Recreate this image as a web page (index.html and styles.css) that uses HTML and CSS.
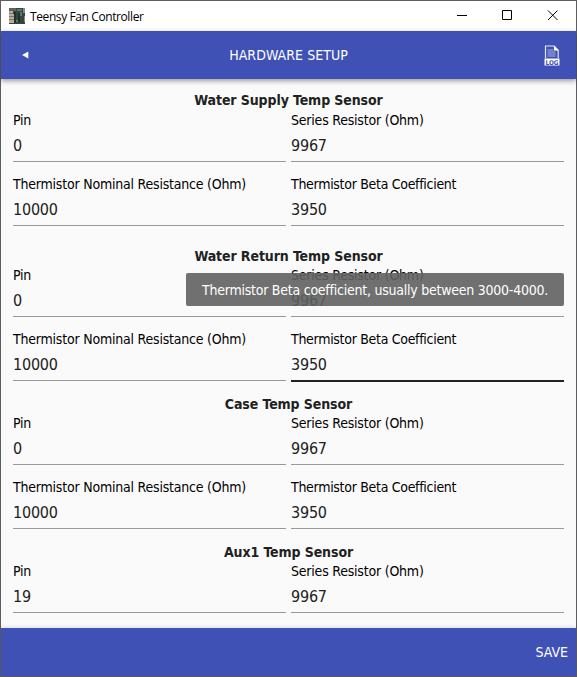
FILE: index.html
```html
<!DOCTYPE html>
<html lang="en">
<head>
<meta charset="utf-8">
<title>Teensy Fan Controller</title>
<link rel="stylesheet" href="styles.css">
</head>
<body>
<div class="window">
  <div class="titlebar">
    <svg class="app-icon" width="16" height="16" viewBox="0 0 16 16" shape-rendering="crispEdges">
      <path fill="#354641" d="M0 0h16v16H0z"/>
      <path fill="#655e55" d="M0 0h7v3H0z"/>
      <path fill="#b9ad99" d="M0 3h4v2H0zM0 6h5v2H0zM0 9h5v2H0zM0 12h5v3H0z"/>
      <path fill="#7d7768" d="M0 5h4v1H0zM0 8h5v1H0zM0 11h5v1H0z"/>
      <path fill="#1f302d" d="M5 4h2v11H5zM9 5h2v9H9z"/>
      <path fill="#60756b" d="M8 1h5v2H8zM11 4h2v4h-2zM7 12h2v2H7z"/>
      <path fill="#8b897b" d="M14 0h2v5h-2zM15 8h1v6h-1z"/>
    </svg>
    <span class="app-name">Teensy Fan Controller</span>
    <svg class="window-buttons" width="138" height="30" viewBox="0 0 138 30" fill="none" stroke="#000">
      <path d="M19 14.500h10M64.500 9.500h9v9h-9zM110 9.500l9.500 9.500M119.500 9.500l-9.500 9.500"/>
    </svg>
  </div>

  <div class="toolbar">
    <svg class="back" width="7" height="8" viewBox="0 0 7 8"><path fill="#fff" d="M0 4 6.300.6v6.800z"/></svg>
    <span class="toolbar-title">HARDWARE SETUP</span>
    <svg class="log-icon" width="16" height="21" viewBox="0 0 16 21">
      <path d="M1.500 13V1h8.500l4.200 4.500V13" fill="none" stroke="#e4e7f6" stroke-width="1.200"/>
      <path d="M10 .5v5h5z" fill="#fff"/>
      <path d="M3.500 5h6M3.500 7h8M3.500 9h8M3.500 11h8" stroke="#aab2de" stroke-width="1.200"/>
      <path d="M.5 13.500h15v7H.5z" fill="#fff"/>
      <text class="log-text" x="8" y="19.500" text-anchor="middle" textLength="13" lengthAdjust="spacingAndGlyphs">LOG</text>
    </svg>
  </div>

  <main class="content">
    <section class="sensor sensor-spaced">
      <h2>Water Supply Temp Sensor</h2>
      <div class="fields">
        <div class="field"><span class="label">Pin</span><span class="value">0</span></div>
        <div class="field"><span class="label">Series Resistor (Ohm)</span><span class="value">9967</span></div>
        <div class="field"><span class="label">Thermistor Nominal Resistance (Ohm)</span><span class="value">10000</span></div>
        <div class="field"><span class="label label-tight">Thermistor Beta Coefficient</span><span class="value">3950</span></div>
      </div>
    </section>
    <section class="sensor">
      <h2>Water Return Temp Sensor</h2>
      <div class="fields">
        <div class="field"><span class="label">Pin</span><span class="value">0</span></div>
        <div class="field"><span class="label">Series Resistor (Ohm)</span><span class="value">9967</span></div>
        <div class="field"><span class="label">Thermistor Nominal Resistance (Ohm)</span><span class="value">10000</span></div>
        <div class="field focused"><span class="label label-tight">Thermistor Beta Coefficient</span><span class="value">3950</span>
          <div class="tooltip">Thermistor Beta coefficient, usually between 3000-4000.</div>
        </div>
      </div>
    </section>
    <section class="sensor">
      <h2>Case Temp Sensor</h2>
      <div class="fields">
        <div class="field"><span class="label">Pin</span><span class="value">0</span></div>
        <div class="field"><span class="label">Series Resistor (Ohm)</span><span class="value">9967</span></div>
        <div class="field"><span class="label">Thermistor Nominal Resistance (Ohm)</span><span class="value">10000</span></div>
        <div class="field"><span class="label label-tight">Thermistor Beta Coefficient</span><span class="value">3950</span></div>
      </div>
    </section>
    <section class="sensor">
      <h2>Aux1 Temp Sensor</h2>
      <div class="fields">
        <div class="field"><span class="label">Pin</span><span class="value">19</span></div>
        <div class="field"><span class="label">Series Resistor (Ohm)</span><span class="value">9967</span></div>
      </div>
    </section>
  </main>

  <div class="footer"><span class="save">SAVE</span></div>
</div>
</body>
</html>
```

FILE: styles.css
```css
* { box-sizing: border-box; }

body {
  margin: 0;
  overflow: hidden;
  font-family: "DejaVu Sans Condensed", "DejaVu Sans", sans-serif;
  font-size: 14px;
  color: #000;
}

.window {
  width: 577px;
  height: 677px;
  border: 1px solid #5d5d5f;
  display: flex;
  flex-direction: column;
  background: #fafafa;
}

.titlebar {
  flex: none;
  height: 30px;
  display: flex;
  align-items: center;
  padding-left: 8px;
  background: #fff;
}

.app-name {
  flex: 1;
  margin-left: 5px;
  padding-top: 1px;
  font: 12px/16px "Open Sans", sans-serif;
  letter-spacing: -0.4px;
}

.toolbar {
  flex: none;
  position: relative;
  z-index: 1;
  height: 48px;
  display: grid;
  grid-template-columns: 48px 1fr 48px;
  align-items: center;
  justify-items: center;
  background: #3f51b5;
  color: #fff;
  box-shadow: 0 2px 5px rgba(0, 0, 0, 0.38);
}

.toolbar-title { letter-spacing: 0.05px; }

.log-text {
  font: bold 6.5px "DejaVu Sans", sans-serif;
  fill: #3f51b5;
}

.content {
  flex: 1;
  min-height: 0;
  padding: 12px 12px 0;
}

.sensor { margin-bottom: 13px; }
.sensor-spaced { margin-bottom: 20px; }

h2 {
  margin: 0;
  height: 20px;
  font-size: 14px;
  line-height: 21px;
  font-weight: bold;
  text-align: center;
  color: #212121;
  letter-spacing: -0.1px;
}

.sensor-spaced h2 { line-height: 19px; }

.fields {
  display: grid;
  grid-template-columns: 1fr 1fr;
  gap: 13px 5px;
}

.field {
  position: relative;
  height: 51px;
  display: flex;
  flex-direction: column;
}

.label {
  height: 18px;
  line-height: 18px;
  white-space: nowrap;
  letter-spacing: -0.21px;
}

.label-tight { letter-spacing: -0.3px; }

.value {
  height: 33px;
  line-height: 34px;
  font-size: 16px;
  color: #212121;
  letter-spacing: -0.2px;
  border-bottom: 1px solid #999;
}

.focused .value { border-bottom: 2px solid #212121; height: 34px; flex: none; }

.tooltip {
  position: absolute;
  right: 0;
  top: -57px;
  width: 378px;
  height: 33px;
  line-height: 35px;
  text-align: center;
  white-space: nowrap;
  letter-spacing: -0.24px;
  color: #fff;
  background: rgba(97, 97, 97, 0.9);
  border-radius: 2px;
}

.footer {
  flex: none;
  position: relative;
  height: 48px;
  display: flex;
  align-items: center;
  justify-content: flex-end;
  padding-right: 8px;
  background: #3f51b5;
  color: #fff;
  box-shadow: 0 -1px 4px rgba(0, 0, 0, 0.12);
}
```
